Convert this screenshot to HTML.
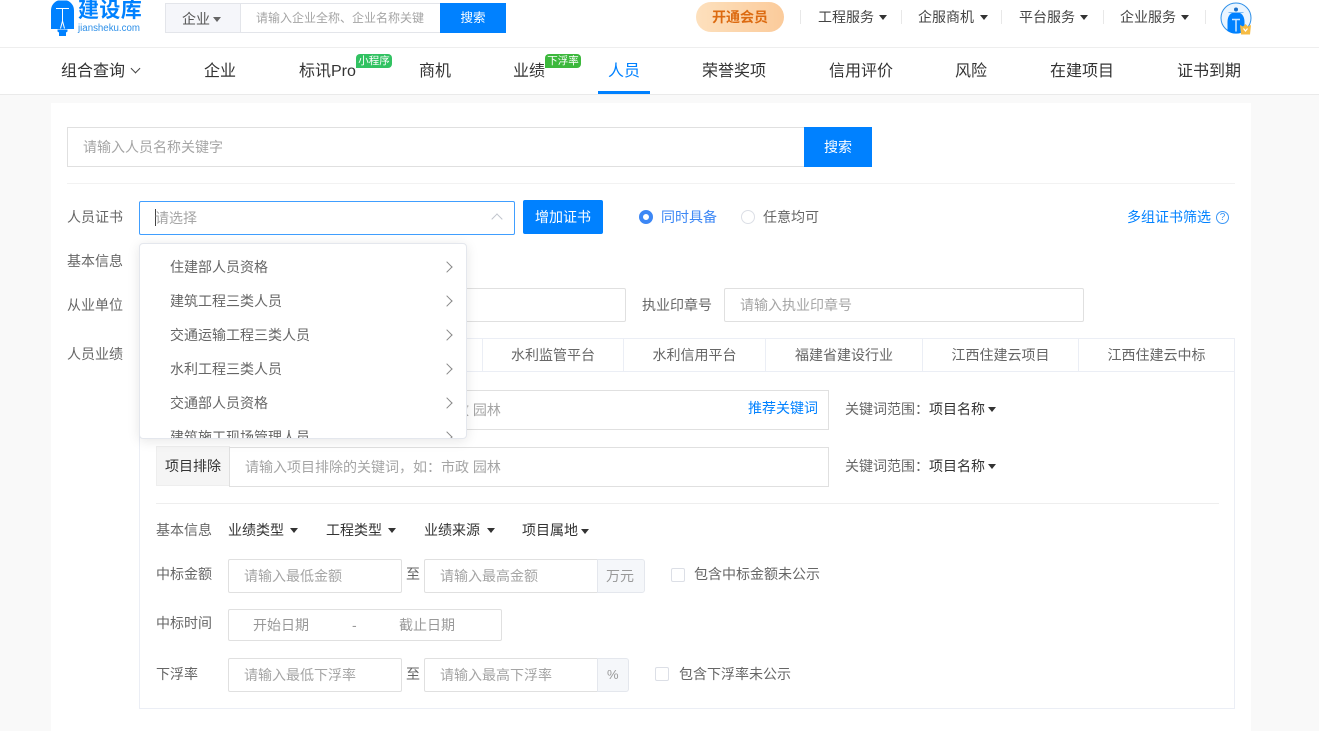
<!DOCTYPE html>
<html lang="zh-CN"><head><meta charset="utf-8"><title>人员</title>
<style>
*{box-sizing:border-box;margin:0;padding:0}
html,body{width:1319px;height:731px;overflow:hidden;background:#f9f9f9;font-family:"Liberation Sans","Noto Sans CJK SC",sans-serif;font-size:14px;color:#333}
.a{position:absolute}
.t{position:absolute;white-space:nowrap;line-height:20px;height:20px}
.g{color:#666}.p{color:#a5a5a5}.b{color:#0081ff}.d{color:#333}
.n{font-size:16px;line-height:24px;height:24px;color:#333;top:60px}
.box{position:absolute;background:#fff;border:1px solid #e0e0e0;border-radius:2px}
.btn{position:absolute;background:#0081ff;color:#fff;text-align:center;border-radius:2px}
.tri{position:absolute;width:0;height:0;border-left:4.5px solid transparent;border-right:4.5px solid transparent;border-top:5px solid #333}
.sep{position:absolute;width:1px;height:14px;background:#e8e8e8;top:10px}
.chk{position:absolute;width:14px;height:14px;border:1px solid #dcdfe6;border-radius:2px;background:#fff}
.tab{position:absolute;top:338px;height:34px;line-height:33px;text-align:center;color:#666;border-right:1px solid #ebeef5;border-bottom:1px solid #ebeef5;border-top:1px solid #ebeef5}
.ar{position:absolute;width:8px;height:8px;border-top:1px solid #888;border-right:1px solid #888;transform:rotate(45deg)}
.bd{position:absolute;height:14px;line-height:14px;color:#fff;font-size:10.5px;text-align:center;border-radius:4px 4px 4px 0;white-space:nowrap}
</style></head><body>

<div class="a" style="left:0;top:0;width:1319px;height:48px;background:#fff;border-bottom:1px solid #eee"></div>
<div class="a" style="left:0;top:48px;width:1319px;height:47px;background:#fff;border-bottom:1px solid #eaeaea"></div>

<svg class="a" style="left:50px;top:0" width="26" height="37" viewBox="0 0 26 37">
<path fill="#0081ff" d="M8 0.500h9c4 1.500 7 5 7 10v18.500h-23V10.500c0-5 3-8.500 7-10z"/>
<path fill="#0081ff" d="M7.500 29.500h10v2l-1.500 1v3.500h-7v-3.500l-1.500-1z"/>
<path fill="none" stroke="#fff" stroke-width="1" d="M6 8.500h13M12.500 8.500v12.500l-2 7.500M12.500 21l2 7.500"/>
</svg>
<div class="t" style="left:78px;top:0;height:22px;line-height:21px;font-size:21px;font-weight:700;color:#0081ff;letter-spacing:.4px">建设库</div>
<div class="t" style="left:78px;top:22px;height:14px;line-height:14px;font-size:9.7px;color:#2d8fe8">jiansheku.com</div>

<div class="a" style="left:165px;top:3px;width:76px;height:30px;background:#f5f6fa;border:1px solid #e3e5ea"></div>
<div class="t" style="left:182px;top:9px;color:#555">企业</div>
<div class="tri" style="left:213px;top:17px;border-top-color:#666"></div>
<div class="a" style="left:240px;top:3px;width:201px;height:30px;background:#fff;border:1px solid #e3e5ea"></div>
<div class="t" style="left:256px;top:8px;font-size:12px;color:#a5a5a5">请输入企业全称、企业名称关键</div>
<div class="btn" style="left:440px;top:3px;width:66px;height:30px;line-height:30px;border-radius:0;font-size:12.5px">搜索</div>

<div class="a" style="left:696px;top:2px;width:88px;height:30px;border-radius:15px;background:linear-gradient(90deg,#fde0bd,#fbcb9b)"></div>
<div class="t" style="left:712px;top:7px;color:#dc6a10;font-size:14px;font-weight:700">开通会员</div>
<div class="sep" style="left:800px"></div>
<div class="t" style="left:818px;top:7px;color:#444">工程服务</div><div class="tri" style="left:879px;top:15px"></div>
<div class="sep" style="left:901px"></div>
<div class="t" style="left:918px;top:7px;color:#444">企服商机</div><div class="tri" style="left:980px;top:15px"></div>
<div class="sep" style="left:1001px"></div>
<div class="t" style="left:1019px;top:7px;color:#444">平台服务</div><div class="tri" style="left:1080px;top:15px"></div>
<div class="sep" style="left:1103px"></div>
<div class="t" style="left:1120px;top:7px;color:#444">企业服务</div><div class="tri" style="left:1181px;top:15px"></div>
<div class="sep" style="left:1205px"></div>
<svg class="a" style="left:1220px;top:2px" width="34" height="34" viewBox="0 0 34 34">
<circle cx="16" cy="16" r="15" fill="#eaf5ff" stroke="#2d8fe8" stroke-width="1"/>
<path fill="#0081ff" d="M16 10c5.500 0 8.500 4 8.500 10v9a15 15 0 0 1-17 0v-9c0-6 3-10 8.500-10z"/>
<path stroke="#cde6ff" stroke-width="1.500" fill="none" d="M12 17.500h8M16 17.500v12"/>
<circle cx="16" cy="7.500" r="2" fill="#1a6fc9"/>
<path stroke="#7fbdf5" d="M8.500 10.500h15" stroke-width="1"/>
<path fill="#f6bb43" d="M20 23l3 1.500 2.500-2.500 2.500 2.500 3-1.500-1 9.500h-9z"/>
<path fill="none" stroke="#fff" stroke-width="1.200" d="M23.500 26.500l2 2.500 2-2.500"/>
</svg>

<div class="t n" style="left:61px">组合查询</div>
<div class="a" style="left:132px;top:65px;width:7px;height:7px;border-right:1.300px solid #444;border-bottom:1.300px solid #444;transform:rotate(45deg)"></div>
<div class="t n" style="left:204px">企业</div>
<div class="t n" style="left:299px">标讯Pro</div>
<div class="bd" style="left:356px;top:54px;width:36px;background:#32c262">小程序</div>
<div class="t n" style="left:419px">商机</div>
<div class="t n" style="left:513px">业绩</div>
<div class="bd" style="left:545px;top:54px;width:36px;background:#3cb83c">下浮率</div>
<div class="t n" style="left:608px;color:#0081ff">人员</div>
<div class="a" style="left:598px;top:91px;width:52px;height:3px;background:#0081ff"></div>
<div class="t n" style="left:702px">荣誉奖项</div>
<div class="t n" style="left:829px">信用评价</div>
<div class="t n" style="left:955px">风险</div>
<div class="t n" style="left:1050px">在建项目</div>
<div class="t n" style="left:1177px">证书到期</div>

<div class="a" style="left:51px;top:103px;width:1200px;height:628px;background:#fff"></div>

<div class="box" style="left:67px;top:127px;width:738px;height:40px;border-radius:0"></div>
<div class="t p" style="left:83px;top:137px">请输入人员名称关键字</div>
<div class="btn" style="left:804px;top:127px;width:68px;height:40px;line-height:40px;border-radius:0">搜索</div>
<div class="a" style="left:67px;top:183px;width:1168px;height:1px;background:#f2f2f2"></div>

<div class="t g" style="left:67px;top:207px">人员证书</div>
<div class="box" style="left:139px;top:201px;width:376px;height:34px;border-color:#409eff"></div>
<div class="a" style="left:155px;top:209px;width:1px;height:17px;background:#444"></div>
<div class="t p" style="left:155px;top:208px">请选择</div>
<div class="a" style="left:493px;top:215px;width:8px;height:8px;border-top:1px solid #c0c4cc;border-left:1px solid #c0c4cc;transform:rotate(45deg)"></div>
<div class="btn" style="left:523px;top:200px;width:80px;height:34px;line-height:34px">增加证书</div>
<div class="a" style="left:639px;top:210px;width:14px;height:14px;border-radius:50%;background:#fff;border:4px solid #3c87f5"></div>
<div class="t b" style="left:661px;top:207px;color:#3c87f5">同时具备</div>
<div class="a" style="left:741px;top:210px;width:14px;height:14px;border-radius:50%;background:#fff;border:1px solid #dcdfe6"></div>
<div class="t g" style="left:763px;top:207px">任意均可</div>
<div class="t b" style="left:1127px;top:207px">多组证书筛选</div>
<div class="a" style="left:1216px;top:211px;width:13px;height:13px;border-radius:50%;border:1px solid #3c97f5;color:#3c97f5;font-size:10px;line-height:11px;text-align:center">?</div>

<div class="t g" style="left:67px;top:251px">基本信息</div>
<div class="t g" style="left:67px;top:295px">从业单位</div>
<div class="box" style="left:139px;top:288px;width:487px;height:34px"></div>
<div class="t g" style="left:642px;top:295px">执业印章号</div>
<div class="box" style="left:724px;top:288px;width:360px;height:34px"></div>
<div class="t p" style="left:740px;top:295px">请输入执业印章号</div>
<div class="t g" style="left:67px;top:344px">人员业绩</div>

<div class="a" style="left:139px;top:338px;width:1096px;height:371px;border:1px solid #ebeef5"></div>
<div class="tab" style="left:482px;width:142px;border-left:1px solid #ebeef5">水利监管平台</div>
<div class="tab" style="left:624px;width:142px">水利信用平台</div>
<div class="tab" style="left:766px;width:157px">福建省建设行业</div>
<div class="tab" style="left:923px;width:156px">江西住建云项目</div>
<div class="tab" style="left:1079px;width:156px">江西住建云中标</div>
<div class="a" style="left:140px;top:371px;width:342px;height:1px;background:#ebeef5"></div>

<div class="box" style="left:229px;top:390px;width:600px;height:40px;border-radius:0"></div>
<div class="t p" style="left:455px;top:400px">政 园林</div>
<div class="t b" style="left:748px;top:398px">推荐关键词</div>
<div class="t g" style="left:845px;top:399px">关键词范围：</div>
<div class="t d" style="left:929px;top:399px">项目名称</div>
<div class="tri" style="left:988px;top:407px"></div>

<div class="a" style="left:156px;top:446px;width:74px;height:40px;background:#f5f5f5;border:1px solid #eee"></div>
<div class="t d" style="left:165px;top:456px">项目排除</div>
<div class="box" style="left:229px;top:447px;width:600px;height:40px;border-radius:0"></div>
<div class="t p" style="left:245px;top:457px">请输入项目排除的关键词，如：市政 园林</div>
<div class="t g" style="left:845px;top:456px">关键词范围：</div>
<div class="t d" style="left:929px;top:456px">项目名称</div>
<div class="tri" style="left:988px;top:464px"></div>
<div class="a" style="left:156px;top:503px;width:1063px;height:1px;background:#eee"></div>

<div class="t g" style="left:156px;top:520px">基本信息</div>
<div class="t d" style="left:228px;top:520px">业绩类型</div><div class="tri" style="left:290px;top:528px"></div>
<div class="t d" style="left:326px;top:520px">工程类型</div><div class="tri" style="left:388px;top:528px"></div>
<div class="t d" style="left:424px;top:520px">业绩来源</div><div class="tri" style="left:487px;top:528px"></div>
<div class="t d" style="left:522px;top:520px">项目属地</div><div class="tri" style="left:581px;top:529px"></div>

<div class="t g" style="left:156px;top:564px">中标金额</div>
<div class="box" style="left:228px;top:559px;width:174px;height:34px"></div>
<div class="t p" style="left:244px;top:566px">请输入最低金额</div>
<div class="t g" style="left:406px;top:564px">至</div>
<div class="box" style="left:424px;top:559px;width:174px;height:34px;border-radius:2px 0 0 2px"></div>
<div class="t p" style="left:440px;top:566px">请输入最高金额</div>
<div class="box" style="left:597px;top:559px;width:48px;height:34px;background:#f5f7fa;border-radius:0 3px 3px 0;border-color:#e4e7ed"></div>
<div class="t p" style="left:606px;top:566px;color:#999">万元</div>
<div class="chk" style="left:671px;top:568px"></div>
<div class="t g" style="left:694px;top:564px">包含中标金额未公示</div>

<div class="t g" style="left:156px;top:613px">中标时间</div>
<div class="box" style="left:228px;top:609px;width:274px;height:32px"></div>
<div class="t p" style="left:253px;top:615px;color:#999">开始日期</div>
<div class="t p" style="left:352px;top:615px;color:#999">-</div>
<div class="t p" style="left:399px;top:615px;color:#999">截止日期</div>

<div class="t g" style="left:156px;top:664px">下浮率</div>
<div class="box" style="left:228px;top:658px;width:174px;height:34px"></div>
<div class="t p" style="left:244px;top:665px">请输入最低下浮率</div>
<div class="t g" style="left:406px;top:664px">至</div>
<div class="box" style="left:424px;top:658px;width:174px;height:34px;border-radius:2px 0 0 2px"></div>
<div class="t p" style="left:440px;top:665px">请输入最高下浮率</div>
<div class="box" style="left:597px;top:658px;width:32px;height:34px;background:#f5f7fa;border-radius:0 3px 3px 0;border-color:#e4e7ed"></div>
<div class="t p" style="left:607px;top:665px;color:#999;font-size:13px">%</div>
<div class="chk" style="left:655px;top:667px"></div>
<div class="t g" style="left:679px;top:664px">包含下浮率未公示</div>

<div class="a" style="left:139px;top:243px;width:328px;height:196px;background:#fff;border:1px solid #e4e7ed;border-radius:4px;box-shadow:0 2px 12px rgba(0,0,0,.1);overflow:hidden">
<div class="t g" style="left:30px;top:13px">住建部人员资格</div><div class="ar" style="left:303px;top:19px"></div>
<div class="t g" style="left:30px;top:47px">建筑工程三类人员</div><div class="ar" style="left:303px;top:53px"></div>
<div class="t g" style="left:30px;top:81px">交通运输工程三类人员</div><div class="ar" style="left:303px;top:87px"></div>
<div class="t g" style="left:30px;top:115px">水利工程三类人员</div><div class="ar" style="left:303px;top:121px"></div>
<div class="t g" style="left:30px;top:149px">交通部人员资格</div><div class="ar" style="left:303px;top:155px"></div>
<div class="t g" style="left:30px;top:183px">建筑施工现场管理人员</div><div class="ar" style="left:303px;top:189px"></div>
</div>
</body></html>
